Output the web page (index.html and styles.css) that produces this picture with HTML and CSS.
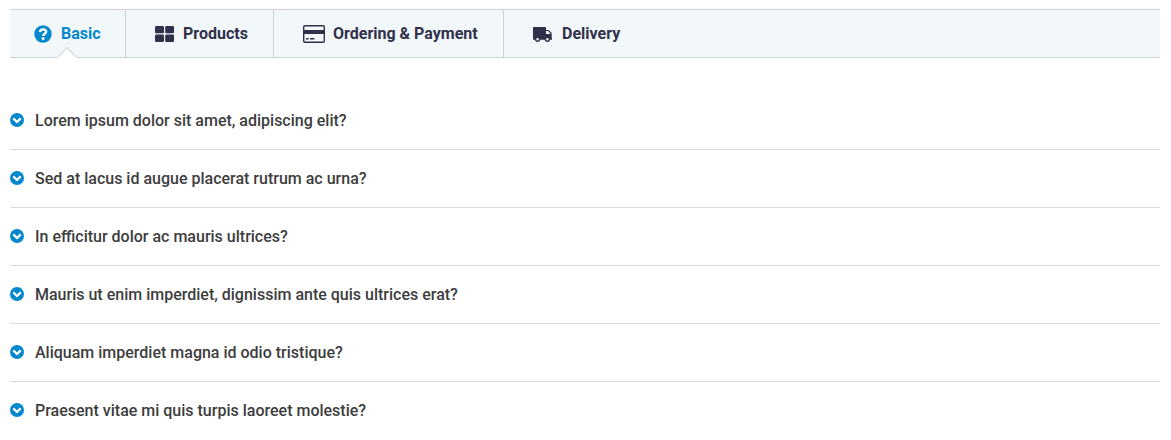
FILE: index.html
```html
<!DOCTYPE html>
<html lang="en">
<head>
    <meta charset="UTF-8">
    <meta name="viewport" content="width=device-width, initial-scale=1.0">
    <title>FAQ</title>
    <link rel="stylesheet" href="styles.css">
</head>
<body>
    <svg class="sprite" aria-hidden="true">
        <symbol id="chevron" viewBox="0 0 14 14">
            <circle cx="7" cy="7" r="7" fill="#0488cd"/>
            <path d="M3.3 5.4L7 9l3.7-3.6" fill="none" stroke="#fff" stroke-width="2.3"/>
        </symbol>
    </svg>

    <nav class="tabs">
        <a class="tab active">
            <svg class="icon-question" viewBox="0 0 18 18">
                <circle cx="9" cy="9" r="8.7" fill="currentColor"/>
                <path d="M5.8 6.9C6.2 5.2 7.4 4.4 9 4.4c1.8 0 3.1.9 3.1 2.3 0 2.1-2.9 2-2.9 4.2" fill="none" stroke="#fff" stroke-width="2.4"/>
                <circle cx="9.1" cy="13.5" r="1.5" fill="#fff"/>
            </svg>
            <span>Basic</span>
        </a>
        <a class="tab">
            <svg class="icon-grid" viewBox="0 0 19 16" fill="currentColor">
                <rect width="9" height="7.3" rx="1.3"/>
                <rect x="10.2" width="8.8" height="7.3" rx="1.3"/>
                <rect y="8.6" width="9" height="7.4" rx="1.3"/>
                <rect x="10.2" y="8.6" width="8.8" height="7.4" rx="1.3"/>
            </svg>
            <span>Products</span>
        </a>
        <a class="tab">
            <svg class="icon-card" viewBox="0 0 22 18">
                <rect x=".7" y=".7" width="20.6" height="16.6" rx="1.4" fill="none" stroke="currentColor" stroke-width="1.4"/>
                <path d="M1 5h20v4H1zM3 13h2.6v1.4H3zM7 13h4.4v1.4H7z" fill="currentColor"/>
            </svg>
            <span>Ordering &amp; Payment</span>
        </a>
        <a class="tab">
            <svg class="icon-truck" viewBox="0 0 19 16">
                <path d="M.8 1h11.4q.8 0 .8.8V4h2.2q.5 0 .9.4l2.2 2.1q.4.4.4.9V12.6h.3v1.2H0v-12Q0 1 .8 1z" fill="currentColor"/>
                <path d="M13 5.1h2l2.4 2.3v.7H13z" fill="#f2f7fa"/>
                <circle cx="4.6" cy="13.2" r="2" fill="#f2f7fa" stroke="currentColor" stroke-width="1.4"/>
                <circle cx="14.4" cy="13.2" r="2" fill="#f2f7fa" stroke="currentColor" stroke-width="1.4"/>
            </svg>
            <span>Delivery</span>
        </a>
    </nav>

    <div class="faq">
        <div class="question"><svg class="icon-chevron"><use href="#chevron"/></svg>Lorem ipsum dolor sit amet, adipiscing elit?</div>
        <div class="question"><svg class="icon-chevron"><use href="#chevron"/></svg>Sed at lacus id augue placerat rutrum ac urna?</div>
        <div class="question"><svg class="icon-chevron"><use href="#chevron"/></svg>In efficitur dolor ac mauris ultrices?</div>
        <div class="question"><svg class="icon-chevron"><use href="#chevron"/></svg>Mauris ut enim imperdiet, dignissim ante quis ultrices erat?</div>
        <div class="question"><svg class="icon-chevron"><use href="#chevron"/></svg>Aliquam imperdiet magna id odio tristique?</div>
        <div class="question"><svg class="icon-chevron"><use href="#chevron"/></svg>Praesent vitae mi quis turpis laoreet molestie?</div>
    </div>
</body>
</html>
```
FILE: styles.css
```css
* {
    box-sizing: border-box;
}
body {
    margin: 0;
    padding: 9px 11px 0 10px;
    font-family: Roboto, sans-serif;
    font-size: 16px;
    background: #fff;
}
.sprite {
    display: none;
}
.tabs {
    display: flex;
    height: 49px;
    background: #f2f7fa;
    border-top: 1px solid #d0d5da;
    border-bottom: 1px solid #ccd3d8;
}
.tab {
    position: relative;
    display: flex;
    align-items: center;
    width: 148px;
    padding-left: 29px;
    border-right: 1px solid #ccd3d8;
    color: #30304a;
    font-weight: 700;
    white-space: nowrap;
    cursor: pointer;
}
.tab:nth-child(3) {
    width: 230px;
}
.tab:last-child {
    border-right: none;
}
.tab.active {
    width: 116px;
    padding-left: 24px;
    color: #0488cd;
}
/* notch under the active tab */
.tab.active::after {
    content: "";
    position: absolute;
    left: 51px;
    bottom: -7px;
    width: 12px;
    height: 12px;
    margin-left: -1px;
    background: #fff;
    border: 1px solid #ccd3d8;
    border-right-color: transparent;
    border-bottom-color: transparent;
    transform: rotate(45deg);
}
.icon-question {
    width: 18px;
    height: 18px;
    margin-right: 9px;
}
.icon-grid {
    width: 19px;
    height: 16px;
    margin-right: 9px;
}
.icon-card {
    width: 22px;
    height: 18px;
    margin-right: 8px;
}
.icon-truck {
    width: 19px;
    height: 16px;
    margin-right: 10px;
}
.faq {
    padding-top: 34px;
}
.question {
    display: flex;
    align-items: center;
    height: 58px;
    border-bottom: 1px solid #dadada;
    color: #3d3d3d;
    font-weight: 500;
}
.question:last-child {
    border-bottom-color: transparent;
}
.icon-chevron {
    width: 14px;
    height: 14px;
    margin: 0 11.5px 1px -0.5px;
}
```
